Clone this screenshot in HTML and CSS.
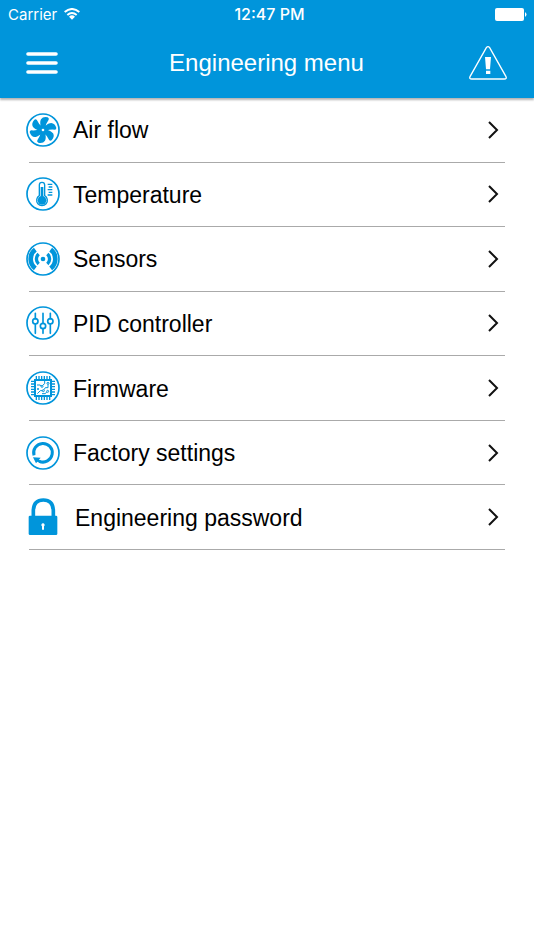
FILE: index.html
```html
<!DOCTYPE html>
<html lang="en">
<head>
<meta charset="utf-8">
<meta name="viewport" content="width=device-width, initial-scale=1">
<title>Engineering menu</title>
<link rel="stylesheet" href="styles.css">
</head>
<body>
<header class="header">
  <div class="status">
    <div class="status-left">
      <span>Carrier</span>
      <svg class="wifi" viewBox="0 0 48 36" aria-hidden="true">
        <path d="M2 12Q24-6 46 12M10 21Q24 9 38 21" fill="none" stroke="#fff" stroke-width="6"/>
        <path d="M15 26Q24 18 33 26L24 35Z" fill="#fff"/>
      </svg>
    </div>
    <time class="clock">12:47 PM</time>
    <svg class="battery" viewBox="0 0 32 13" aria-hidden="true">
      <rect width="29" height="13" rx="2" fill="#fff"/>
      <path d="M30 4q3 2.500 0 5z" fill="#fff"/>
    </svg>
  </div>
  <div class="bar">
    <button class="icon-button" type="button" aria-label="Open menu">
      <svg class="burger" viewBox="0 0 32 24" aria-hidden="true">
        <path d="M2 3H30M2 12H30M2 21H30" stroke="#fff" stroke-width="3.600" stroke-linecap="round"/>
      </svg>
    </button>
    <h1 class="title">Engineering menu</h1>
    <button class="icon-button" type="button" aria-label="Warnings">
      <svg class="warning" viewBox="0 0 114 102" aria-hidden="true">
        <path d="M52 5Q57-1 62 5L111 92Q114 99 106 99H8Q0 99 3 92Z" fill="none" stroke="#fff" stroke-width="4"/>
        <path d="M48 33H66L63 70H51ZM51 74H64V84H51Z" fill="#fff"/>
      </svg>
    </button>
  </div>
</header>
<main>
  <ul class="menu">
    <li class="item"><a class="link" href="#air-flow">
      <svg class="icon" viewBox="0 0 102 102" aria-hidden="true">
        <circle class="line" cx="51" cy="51" r="48" stroke-width="5"/>
        <defs><path id="blade" d="M44 47C45 38 40 28 45 19Q51 10 65 13Q70 15 68 20Q59 32 58 45Z"/></defs>
        <g class="fill">
          <use href="#blade"/><use href="#blade" transform="rotate(60 51 51)"/><use href="#blade" transform="rotate(120 51 51)"/>
          <use href="#blade" transform="rotate(180 51 51)"/><use href="#blade" transform="rotate(240 51 51)"/><use href="#blade" transform="rotate(300 51 51)"/>
          <circle cx="51" cy="51" r="12"/>
        </g>
        <circle cx="51" cy="51" r="4" fill="#fff"/>
      </svg>
      <span class="label">Air flow</span>
      <svg class="chevron" viewBox="0 0 10 18" aria-hidden="true"><path d="M1 1L9 9L1 17"/></svg>
    </a></li>
    <li class="item"><a class="link" href="#temperature">
      <svg class="icon" viewBox="0 0 102 102" aria-hidden="true">
        <circle class="line" cx="51" cy="51" r="48" stroke-width="5"/>
        <path class="line" d="M40 56V24Q40 16 48 16T56 24V56A16 16 0 1 1 40 56Z" stroke-width="4"/>
        <circle class="fill" cx="48" cy="70" r="13"/>
        <path class="line" d="M48 30V70" stroke-width="8"/>
        <path class="line" d="M65 22H79M68 30H79M65 38H79M68 46H79M65 54H79" stroke-width="4"/>
      </svg>
      <span class="label">Temperature</span>
      <svg class="chevron" viewBox="0 0 10 18" aria-hidden="true"><path d="M1 1L9 9L1 17"/></svg>
    </a></li>
    <li class="item"><a class="link" href="#sensors">
      <svg class="icon" viewBox="0 0 102 102" aria-hidden="true">
        <circle class="line" cx="51" cy="51" r="48" stroke-width="5"/>
        <circle class="fill" cx="51" cy="51" r="7"/>
        <path class="line" d="M38 36A20 20 0 0 0 38 66M64 36A20 20 0 0 1 64 66" stroke-width="10"/>
        <path class="line" d="M28 23A35 35 0 0 0 28 79M74 23A35 35 0 0 1 74 79" stroke-width="14"/>
      </svg>
      <span class="label">Sensors</span>
      <svg class="chevron" viewBox="0 0 10 18" aria-hidden="true"><path d="M1 1L9 9L1 17"/></svg>
    </a></li>
    <li class="item"><a class="link" href="#pid">
      <svg class="icon" viewBox="0 0 102 102" aria-hidden="true">
        <circle class="line" cx="51" cy="51" r="48" stroke-width="5"/>
        <path class="line" d="M28 22V38M28 54V82M51 22V52M51 68V82M73 22V38M73 54V82" stroke-width="5" stroke-linecap="round"/>
        <g class="line" stroke-width="5"><circle cx="28" cy="46" r="8"/><circle cx="51" cy="60" r="8"/><circle cx="73" cy="46" r="8"/></g>
      </svg>
      <span class="label">PID controller</span>
      <svg class="chevron" viewBox="0 0 10 18" aria-hidden="true"><path d="M1 1L9 9L1 17"/></svg>
    </a></li>
    <li class="item"><a class="link" href="#firmware">
      <svg class="icon" viewBox="0 0 102 102" aria-hidden="true">
        <circle class="line" cx="51" cy="51" r="48" stroke-width="5"/>
        <rect class="line" x="27" y="27" width="48" height="48" stroke-width="6"/>
        <path class="line" d="M31 15V26M39 15V26M47 15V26M55 15V26M63 15V26M71 15V26M31 76V87M39 76V87M47 76V87M55 76V87M63 76V87M71 76V87M15 31H26M15 39H26M15 47H26M15 55H26M15 63H26M15 71H26M76 31H87M76 39H87M76 47H87M76 55H87M76 63H87M76 71H87" stroke-width="4"/>
        <path class="line" d="M56 30V38L50 43M66 40V50H58L54 56M33 42H42L46 45M34 68L43 59H49M48 68H58L62 63" stroke-width="3"/>
        <g class="line" stroke-width="3"><circle cx="48" cy="46" r="3"/><circle cx="66" cy="37" r="3"/><circle cx="52" cy="59" r="3"/><circle cx="65" cy="61" r="3"/><circle cx="36" cy="54" r="2"/></g>
      </svg>
      <span class="label">Firmware</span>
      <svg class="chevron" viewBox="0 0 10 18" aria-hidden="true"><path d="M1 1L9 9L1 17"/></svg>
    </a></li>
    <li class="item"><a class="link" href="#factory-settings">
      <svg class="icon" viewBox="0 0 102 102" aria-hidden="true">
        <circle class="line" cx="51" cy="51" r="48" stroke-width="5"/>
        <path class="line" d="M24 58A28 28 0 1 1 40 76" stroke-width="9"/>
        <path class="fill" d="M21 64L44 65L39 71L46 74L43 82L34 77L30 82Z"/>
      </svg>
      <span class="label">Factory settings</span>
      <svg class="chevron" viewBox="0 0 10 18" aria-hidden="true"><path d="M1 1L9 9L1 17"/></svg>
    </a></li>
    <li class="item"><a class="link" href="#engineering-password">
      <svg class="icon icon-lock" viewBox="0 0 108 114" aria-hidden="true">
        <path class="line" d="M22 58V38Q23 6 52 6T82 38V58" stroke-width="11"/>
        <rect class="fill" x="8" y="53" width="86" height="58" rx="4"/>
        <path d="M51 76a5 5 0 0 1 3 9V95H48V85a5 5 0 0 1 3-9Z" fill="#fff"/>
      </svg>
      <span class="label">Engineering password</span>
      <svg class="chevron" viewBox="0 0 10 18" aria-hidden="true"><path d="M1 1L9 9L1 17"/></svg>
    </a></li>
  </ul>
</main>
</body>
</html>
```
FILE: styles.css
```css
:root {
  --blue: #0095db;
}

* {
  box-sizing: border-box;
}

body {
  margin: 0;
  background: #fff;
  color: #000;
  font-family: "Liberation Sans", Arial, sans-serif;
}

.header {
  background: var(--blue);
  color: #fff;
  box-shadow: 0 2px 2px rgba(0, 0, 0, 0.3);
}

.status {
  display: grid;
  grid-template-columns: 1fr auto 1fr;
  align-items: center;
  height: 28px;
  padding: 0 7px 0 8px;
  font-family: Inter, "Liberation Sans", sans-serif;
  font-size: 15px;
}

.status-left {
  display: flex;
  align-items: center;
  gap: 7px;
}

.wifi {
  width: 16px;
  height: 12px;
}

.clock {
  padding-left: 4px;
  font-size: 16px;
  font-weight: 500;
}

.battery {
  justify-self: end;
  width: 32px;
  height: 13px;
}

.bar {
  display: flex;
  align-items: center;
  justify-content: space-between;
  height: 70px;
  padding: 0 27px 0 26px;
}

.icon-button {
  display: flex;
  align-items: center;
  width: 38px;
  height: 44px;
  padding: 0;
  border: 0;
  background: none;
}

.burger {
  width: 32px;
  height: 24px;
}

.warning {
  width: 38px;
  height: 34px;
}

.title {
  margin: 0;
  font-size: 24px;
  font-weight: 400;
}

.menu {
  display: grid;
  grid-auto-rows: 1fr;
  min-height: 452px;
  margin: 0;
  padding: 0 29px;
  list-style: none;
}

.item {
  border-bottom: 1px solid #aaa;
}

.link {
  display: grid;
  grid-template-columns: auto 1fr auto;
  align-items: center;
  gap: 13px;
  height: 100%;
  margin: 0 -3px;
  padding-right: 10px;
  color: inherit;
  font-size: 23px;
  text-decoration: none;
}

.label {
  padding-top: 2px;
}

.icon {
  width: 34px;
  height: 34px;
}

.icon-lock {
  width: 36px;
  height: 38px;
}

.line {
  fill: none;
  stroke: var(--blue);
}

.fill {
  fill: var(--blue);
}

.chevron {
  width: 10px;
  height: 18px;
  fill: none;
  stroke: #111;
  stroke-width: 2;
  overflow: visible;
}
```
